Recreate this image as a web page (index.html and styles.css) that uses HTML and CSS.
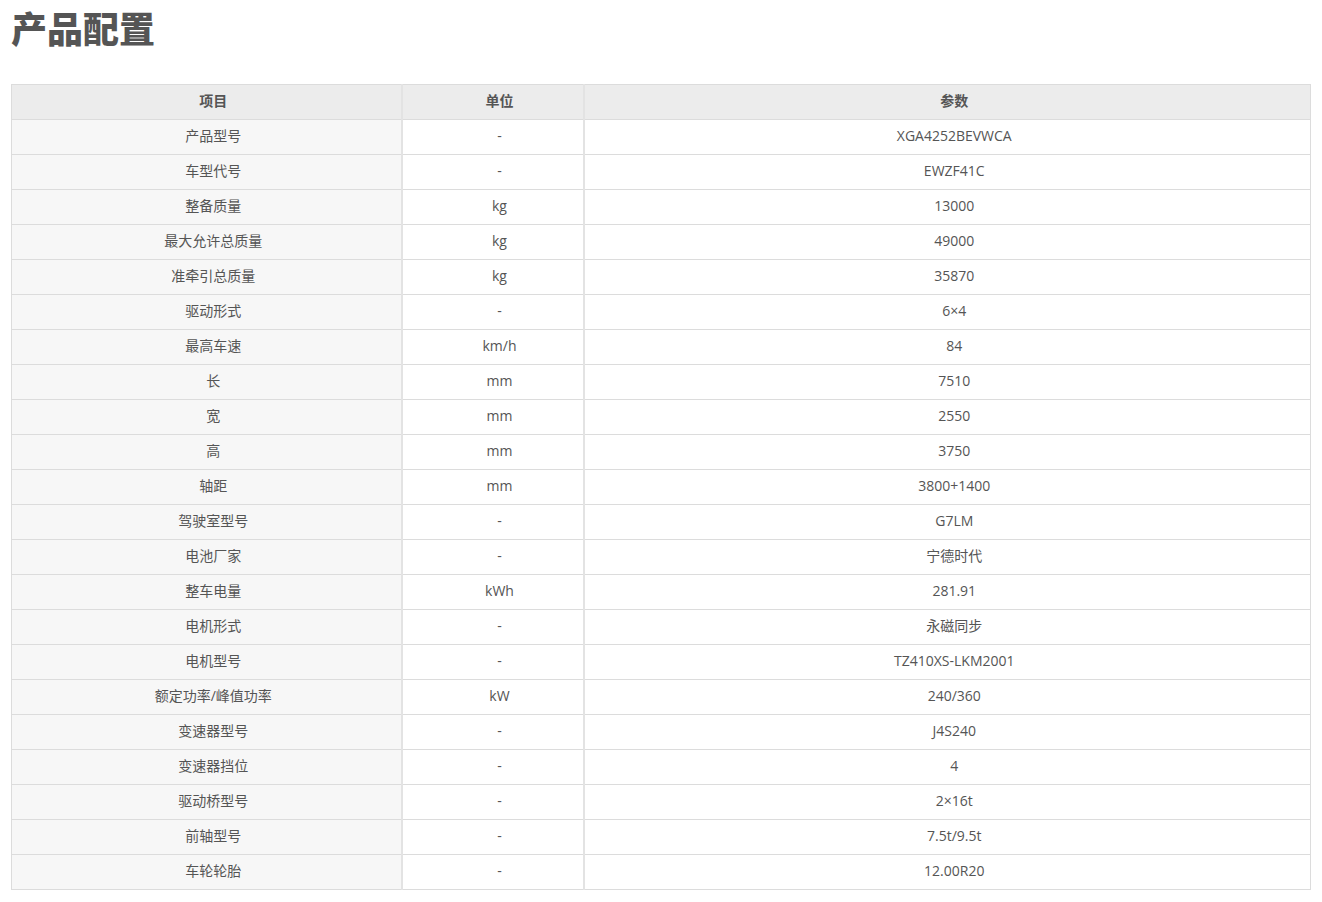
FILE: index.html
```html
<!DOCTYPE html>
<html lang="zh">
<head>
<meta charset="utf-8">
<title>产品配置</title>
<link rel="stylesheet" href="styles.css">
</head>
<body>
<h1 class="title">产品配置</h1>
<table class="spec">
<colgroup><col class="c1"><col class="c2"><col class="c3"></colgroup>
<thead>
<tr><th>项目</th><th>单位</th><th>参数</th></tr>
</thead>
<tbody>
<tr><td>产品型号</td><td>-</td><td>XGA4252BEVWCA</td></tr>
<tr><td>车型代号</td><td>-</td><td>EWZF41C</td></tr>
<tr><td>整备质量</td><td>kg</td><td>13000</td></tr>
<tr><td>最大允许总质量</td><td>kg</td><td>49000</td></tr>
<tr><td>准牵引总质量</td><td>kg</td><td>35870</td></tr>
<tr><td>驱动形式</td><td>-</td><td>6×4</td></tr>
<tr><td>最高车速</td><td>km/h</td><td>84</td></tr>
<tr><td>长</td><td>mm</td><td>7510</td></tr>
<tr><td>宽</td><td>mm</td><td>2550</td></tr>
<tr><td>高</td><td>mm</td><td>3750</td></tr>
<tr><td>轴距</td><td>mm</td><td>3800+1400</td></tr>
<tr><td>驾驶室型号</td><td>-</td><td>G7LM</td></tr>
<tr><td>电池厂家</td><td>-</td><td>宁德时代</td></tr>
<tr><td>整车电量</td><td>kWh</td><td>281.91</td></tr>
<tr><td>电机形式</td><td>-</td><td>永磁同步</td></tr>
<tr><td>电机型号</td><td>-</td><td>TZ410XS-LKM2001</td></tr>
<tr><td>额定功率/峰值功率</td><td>kW</td><td>240/360</td></tr>
<tr><td>变速器型号</td><td>-</td><td>J4S240</td></tr>
<tr><td>变速器挡位</td><td>-</td><td>4</td></tr>
<tr><td>驱动桥型号</td><td>-</td><td>2×16t</td></tr>
<tr><td>前轴型号</td><td>-</td><td>7.5t/9.5t</td></tr>
<tr><td>车轮轮胎</td><td>-</td><td>12.00R20</td></tr>
</tbody>
</table>
</body>
</html>
```
FILE: styles.css
```css
html, body {
  margin: 0;
  padding: 0;
  background: #fff;
}
body {
  padding: 0 11px;
  font-family: "Noto Sans CJK SC", "Noto Sans", sans-serif;
  color: #555;
}
.title {
  margin: 0;
  padding-top: 3px;
  font-size: 36px;
  line-height: 48px;
  font-weight: 900;
  color: #555;
  height: 81px;
}
.spec {
  width: 1300px;
  border-collapse: collapse;
  table-layout: fixed;
  font-size: 14px;
  font-family: "Open Sans", "Noto Sans CJK SC", sans-serif;
}
.c1 { width: 390px; }
.c2 { width: 182px; }
.spec th, .spec td {
  height: 31px;
  padding: 0 0 3px 14px;
  text-align: center;
  vertical-align: middle;
  border-top: 1px solid #dcdcdc;
  border-bottom: 1px solid #dcdcdc;
  border-left: 2px solid #e3e3e3;
  border-right: 2px solid #e3e3e3;
  line-height: 20px;
  color: #555;
}
.spec th:first-child, .spec td:first-child { border-left: 1px solid #dcdcdc; }
.spec th:last-child, .spec td:last-child { border-right: 1px solid #dcdcdc; }
.spec th {
  background: #ececec;
  font-weight: 700;
}
.spec td:first-child {
  background: #f7f7f7;
}
```
